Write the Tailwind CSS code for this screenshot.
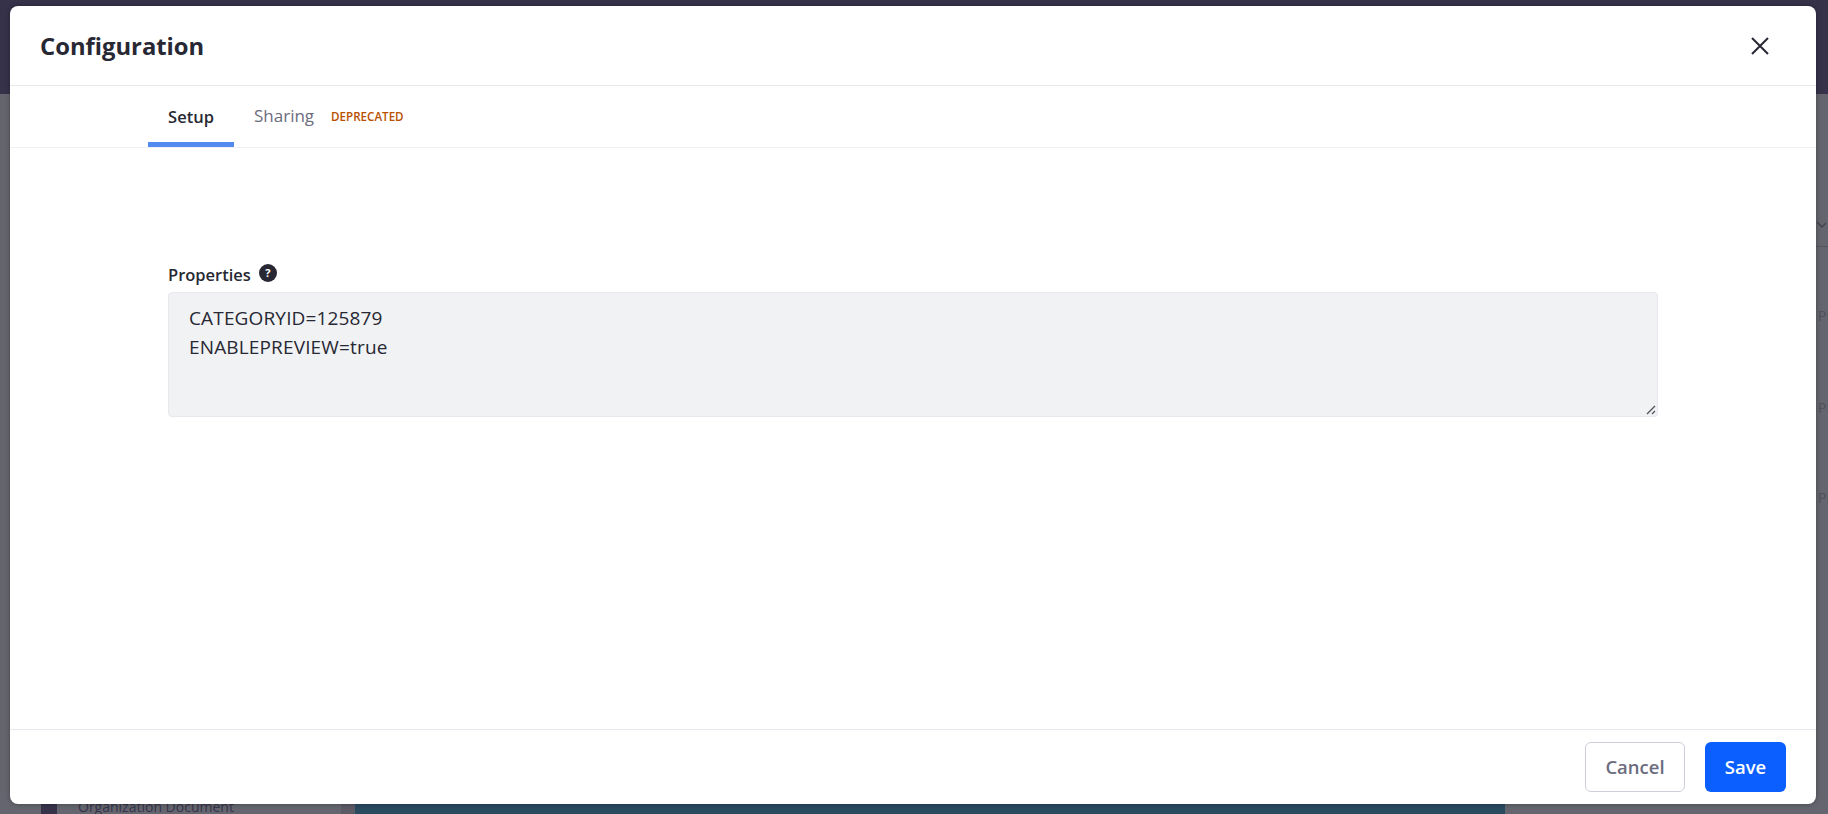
<!DOCTYPE html>
<html lang="en">
<head>
    <meta charset="UTF-8">
    <title>Configuration</title>
    <script src="https://cdn.jsdelivr.net/npm/@tailwindcss/browser@4"></script>
</head>
<body class="relative h-[814px] w-[1828px] overflow-hidden bg-[#65656f] font-['Open_Sans','Noto_Sans',sans-serif] text-[#272833]">
    <!-- Page behind the backdrop -->
    <div class="h-[94px] bg-[#36324a]"></div>
    <div class="relative h-[720px]">
        <svg class="absolute right-[2px] top-[127px]" width="10" height="8" viewBox="0 0 10 8" fill="none" stroke="#45434f" stroke-width="1.5"><path d="M1 1l5 5 5-5"/></svg>
        <div class="absolute right-0 top-[152px] h-px w-[12px] bg-[#55555f]"></div>
        <span class="absolute left-[1818px] top-[212px] text-sm text-[#50505a]">PI</span>
        <span class="absolute left-[1818px] top-[304px] text-sm text-[#50505a]">PI</span>
        <span class="absolute left-[1818px] top-[394px] text-sm text-[#50505a]">PI</span>
        <div class="absolute bottom-0 left-[341px] h-[20px] w-[14px] bg-[#5b5a65]"></div>
        <div class="absolute bottom-0 left-[355px] h-[20px] w-[1150px] bg-[#2a4a60]"></div>
        <div class="absolute bottom-0 left-[41px] h-[12px] w-[16px] bg-[#36324a]"></div>
        <span class="absolute bottom-[-3px] left-[78px] text-sm text-[#36344a]">Organization Document</span>
    </div>

    <!-- Modal -->
    <div class="absolute left-[10px] top-[6px] flex h-[798px] w-[1806px] flex-col rounded-[8px] bg-white shadow-[0_0_5px_rgba(0,0,0,0.35)]">
        <header class="flex h-[80px] shrink-0 items-center justify-between border-b border-[#e7e7ed] pl-[30px] pr-[46px]">
            <h1 class="pt-[2px] text-[23.8px] font-bold leading-none">Configuration</h1>
            <button class="text-[#272833]">
                <svg width="20" height="20" viewBox="0 0 20 20" fill="none" stroke="currentColor" stroke-width="2"><path d="M2 2l16 16M18 2L2 18"/></svg>
            </button>
        </header>
        <nav class="flex h-[62px] shrink-0 items-stretch border-b border-[#f1f1f4] pl-[138px]">
            <a class="flex w-[86px] items-center justify-center border-b-[5px] border-[#528af0] pt-[6px] text-[16.5px] font-semibold">Setup</a>
            <a class="ml-[20px] flex items-center pb-[1px] text-[17px] text-[#6b6c7e]">Sharing</a>
            <span class="ml-[17px] flex items-center pt-[1px] text-[11.6px] font-semibold text-[#b95000]">DEPRECATED</span>
        </nav>
        <main class="flex-1 pl-[158px] pr-[158px] pt-[115px]">
            <div class="mb-[5px] flex items-center gap-[8px]">
                <label class="text-[16.5px] font-semibold leading-[24px]">Properties</label>
                <span class="mb-[4px] flex h-[18px] w-[18px] items-center justify-center rounded-full bg-[#272833] text-[11px] font-bold text-white">?</span>
            </div>
            <div class="relative w-[1490px]">
                <textarea readonly class="block h-[125px] w-full resize-none rounded-[4px] border border-[#e7e7ed] bg-[#f1f2f4] px-[20px] py-[11px] text-[19px] leading-[29px] tracking-[0.15px] outline-none">CATEGORYID=125879
ENABLEPREVIEW=true</textarea>
                <!-- resize handle -->
                <svg class="absolute bottom-[2px] right-[2px]" width="10" height="10" viewBox="0 0 10 10" fill="none" stroke="#55555f" stroke-width="1.4"><path d="M1 9l8-8M6 9l3-3"/></svg>
            </div>
        </main>
        <footer class="flex h-[75px] shrink-0 items-center justify-end gap-[20px] border-t border-[#e7e7ed] pr-[30px]">
            <button class="h-[50px] w-[100px] rounded-[6px] border border-[#cdced9] bg-white text-[18.5px] font-semibold text-[#6b6c7e]">Cancel</button>
            <button class="h-[50px] w-[81px] rounded-[6px] bg-[#0b5fff] text-[18.5px] font-semibold text-white">Save</button>
        </footer>
    </div>
</body>
</html>
